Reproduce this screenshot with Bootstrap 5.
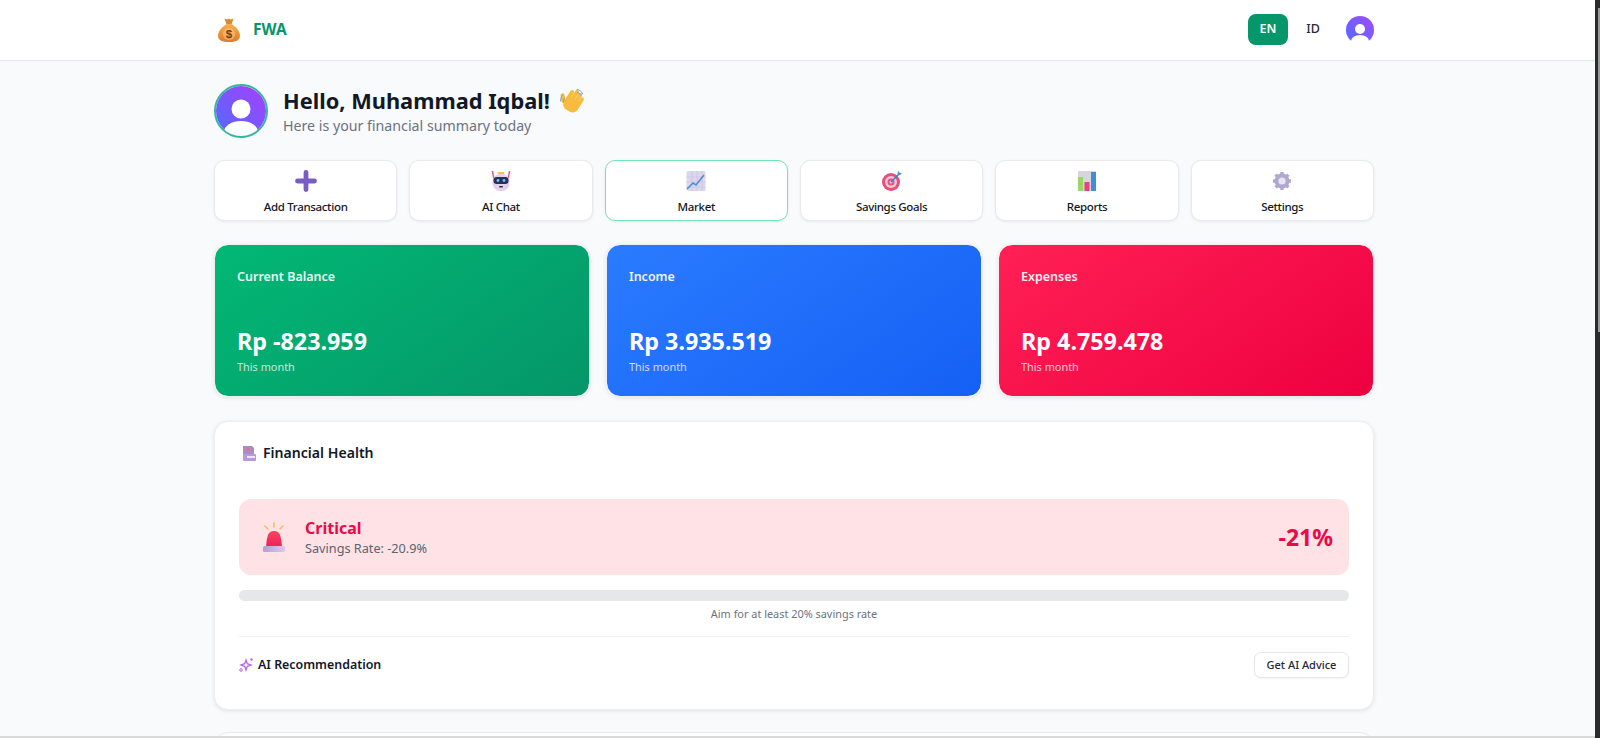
<!DOCTYPE html>
<html lang="en">
<head>
    <meta charset="UTF-8">
    <meta name="viewport" content="width=device-width, initial-scale=1.0">
    <title>FWA</title>
    <link href="https://cdn.jsdelivr.net/npm/bootstrap@5.3.0/dist/css/bootstrap.min.css" rel="stylesheet">
    <style>
        html, body { height: 738px; overflow: hidden; }
        body { background: #f9fafb; font-family: "Noto Sans", "Open Sans", sans-serif; color: #111827; }
        .page-wrap { width: 1160px; margin-left: 214px; }
        .top-bar { height: 61px; background: #fff; border-bottom: 1px solid #e5e7eb; }
        .brand-name { color: #059669; font-weight: 700; font-size: 15.5px; margin-left: 12px; }
        .lang-on { background: #059669; color: #fff; font-size: 12.5px; font-weight: 600; width: 40px; height: 31px; border-radius: 8px; border: 0; padding: 0; margin-bottom: 1px; }
        .lang-off { background: transparent; color: #1f2937; font-size: 12.5px; font-weight: 500; width: 40px; height: 31px; border: 0; padding: 0; margin: 0 13px 1px 5px; }
        .hello-row { padding-top: 23px; margin-bottom: 22px; }
        .hello-avatar { width: 54px; height: 54px; border-radius: 50%; border: 2px solid #34b89a; overflow: hidden; margin-right: 15px; flex: none; }
        .hello-title { font-size: 21.8px; font-weight: 700; line-height: 30px; margin: 0; color: #111827; }
        .hello-sub { font-size: 14.2px; line-height: 20px; color: #6b7280; margin: 0; }
        .act-grid { display: grid; grid-template-columns: repeat(6, 1fr); gap: 12px; margin-bottom: 23px; }
        .act-btn { height: 61px; background: #fff; border: 1px solid #e8eaee; border-radius: 10px; box-shadow: 0 1px 3px rgba(0,0,0,.07); display: flex; flex-direction: column; align-items: center; padding-top: 9px; font-size: 11.5px; letter-spacing: -.33px; font-weight: 500; color: #111827; }
        .act-btn span { line-height: 16px; margin-top: 7px; }
        .act-btn.act-on { border-color: #6ee7b7; }
        .act-btn svg { width: 22px; height: 22px; flex: none; }
        .stat-grid { display: grid; grid-template-columns: repeat(3, 1fr); gap: 16px; margin-bottom: 24px; }
        .stat-box { height: 153px; border: 1px solid #eef0f3; background-clip: padding-box; border-radius: 14px; color: #fff; padding: 23px 22px; box-shadow: 0 1px 4px rgba(0,0,0,.1); }
        .stat-label { font-size: 12.5px; font-weight: 600; line-height: 18px; opacity: .92; margin-bottom: 40px; }
        .stat-value { font-size: 23.3px; font-weight: 700; line-height: 30px; }
        .stat-note { font-size: 10.9px; line-height: 16px; opacity: .75; margin-top: 3px; }
        .bg-green { background-image: linear-gradient(145deg, #02b875, #059669); }
        .bg-blue { background-image: linear-gradient(145deg, #2b7bff, #1560f5); }
        .bg-red { background-image: linear-gradient(145deg, #ff2055, #ee0040); }
        .health-box { height: 289px; background: #fff; border-radius: 14px; border: 1px solid #eceef1; box-shadow: 0 1px 4px rgba(0,0,0,.1); padding: 19px 24px 0; margin-bottom: 22px; }
        .health-title { font-size: 14.1px; font-weight: 600; line-height: 24px; margin-bottom: 34px; color: #111827; }
        .health-title svg { width: 13px; height: 15px; margin: 0 7px 0 4px; }
        .alert-row { height: 76px; background: #fee2e5; border-radius: 12px; padding: 0 16px 0 24px; }
        .alert-name { color: #e90b45; font-size: 16px; font-weight: 700; line-height: 22px; }
        .alert-rate { color: #5b6470; font-size: 12.7px; line-height: 18px; }
        .alert-pct { color: #e90b45; font-size: 23px; font-weight: 700; }
        .bar-track { height: 11px; background: #e5e7eb; border-radius: 6px; margin-top: 15px; }
        .bar-hint { font-size: 10.9px; line-height: 16px; color: #6b7280; text-align: center; margin-top: 5px; }
        .rule-line { height: 1px; background: #f0f1f3; margin: 14px 0 15px; }
        .rec-title { font-size: 12.4px; font-weight: 600; color: #111827; }
        .rec-title svg { width: 15px; height: 15px; margin-right: 4px; }
        .advice-btn { width: 95px; height: 26px; background: #fff; border: 1px solid #e5e7eb; border-radius: 7px; box-shadow: 0 1px 2px rgba(0,0,0,.05); font-size: 11px; font-weight: 500; color: #1f2937; padding: 0; }
        .next-clip { height: 6px; overflow: hidden; }
        .next-box { height: 60px; background: #fff; border: 1px solid #e5e7eb; border-radius: 14px; }
        .shot-bar { position: fixed; top: 0; right: 0; width: 5px; height: 738px; background: #2b2b2b; }
        .shot-thumb { position: fixed; top: 8px; right: 0; width: 2px; height: 324px; background: #9a9a9a; }
        .shot-line { position: fixed; left: 0; bottom: 0; width: 1595px; height: 2px; background: #d9d9d9; }
    </style>
</head>
<body>
    <nav class="top-bar">
        <div class="page-wrap d-flex align-items-center justify-content-between h-100">
            <div class="d-flex align-items-center">
                <svg width="24" height="26" viewBox="0 0 24 26" style="margin-left:3px">
                    <defs><linearGradient id="bagGrad" x1="0" y1="0" x2="0" y2="1"><stop offset="0" stop-color="#f9b04e"/><stop offset="1" stop-color="#e0792a"/></linearGradient></defs>
                    <path d="M7.500 1.500l3 1 1.500-1 1.500 1 3-1-2 6h-5z" fill="#d98a35"/>
                    <path d="M9.500 7h5c4 2.500 8.500 7 8.500 11.500 0 5-4.500 6.500-11 6.500S1 23.500 1 18.500C1 14 5.500 9.500 9.500 7z" fill="url(#bagGrad)"/>
                    <circle cx="12" cy="17" r="6" fill="#fbd08a" opacity=".55"/>
                    <text x="12" y="21" font-size="11.500" font-weight="700" text-anchor="middle" fill="#6b3f16" font-family="Liberation Sans">$</text>
                </svg>
                <span class="brand-name">FWA</span>
            </div>
            <div class="d-flex align-items-center">
                <button class="lang-on">EN</button>
                <button class="lang-off">ID</button>
                <svg width="28" height="28" viewBox="0 0 28 28">
                    <defs><linearGradient id="navGrad" x1="0" y1="1" x2="1" y2="0"><stop offset="0" stop-color="#4f6cff"/><stop offset="1" stop-color="#a24bff"/></linearGradient></defs>
                    <circle cx="14" cy="14" r="14" fill="url(#navGrad)"/>
                    <circle cx="14" cy="13" r="5" fill="#fff"/>
                    <ellipse cx="14" cy="25" rx="9" ry="6" fill="#fff"/>
                </svg>
            </div>
        </div>
    </nav>

    <main class="page-wrap">
        <div class="d-flex align-items-center hello-row">
            <div class="hello-avatar">
                <svg width="50" height="50" viewBox="0 0 50 50" class="d-block">
                    <defs><linearGradient id="bigGrad" x1="0" y1="1" x2="1" y2="0"><stop offset="0" stop-color="#4f6cff"/><stop offset="1" stop-color="#a83fff"/></linearGradient></defs>
                    <rect width="50" height="50" fill="url(#bigGrad)"/>
                    <circle cx="25" cy="23" r="9.500" fill="#fff"/>
                    <ellipse cx="25" cy="46" rx="17" ry="11" fill="#fff"/>
                </svg>
            </div>
            <div>
                <h1 class="hello-title d-flex align-items-center">Hello, Muhammad Iqbal!
                    <svg width="26" height="26" viewBox="0 0 26 26" style="margin-left:9px">
                        <g fill="#f7bb3e" transform="rotate(32 14 14)">
                            <rect x="6" y="4" width="4" height="13" rx="2"/>
                            <rect x="10.200" y="1.500" width="4" height="14" rx="2"/>
                            <rect x="14.400" y="2" width="4" height="14" rx="2"/>
                            <rect x="18.500" y="5" width="3.600" height="12" rx="1.800"/>
                            <rect x="6" y="10" width="16" height="14" rx="6"/>
                            <rect x="1.500" y="11" width="4" height="10" rx="2" transform="rotate(-40 3.500 16)"/>
                        </g>
                        <path d="M1.500 13c0-2.500.700-4.500 2-6M4.500 14c0-1.600.400-3 1.300-4M18 1.500c2.400.300 4.500 1.700 5.500 4M18.500 4.500c1.400.200 2.500 1 3 2.200" stroke="#6ba4dc" stroke-width="1" fill="none" stroke-linecap="round"/>
                    </svg>
                </h1>
                <p class="hello-sub">Here is your financial summary today</p>
            </div>
        </div>

        <div class="act-grid">
            <div class="act-btn">
                <svg viewBox="0 0 22 22"><path d="M11 2.500v17M2.500 11h17" stroke="#7a5cc2" stroke-width="4.800" stroke-linecap="round"/></svg>
                <span>Add Transaction</span>
            </div>
            <div class="act-btn">
                <svg viewBox="0 0 22 22">
                    <path d="M2.500 1l1.500 9M19.500 1L18 10" stroke="#e4577c" stroke-width="1.500"/>
                    <path d="M7.500 2h7l-1 3h-5z" fill="#f4c34a"/>
                    <rect x="2.500" y="4" width="17" height="17" rx="7.500" fill="#e6d0e8"/>
                    <rect x="3.500" y="7" width="15" height="7" rx="3.200" fill="#26305c"/>
                    <circle cx="8" cy="10.500" r="1.400" fill="#6fc7f5"/><circle cx="14" cy="10.500" r="1.400" fill="#6fc7f5"/>
                    <rect x="9" y="16" width="4" height="1.600" rx=".8" fill="#26305c"/>
                </svg>
                <span>AI Chat</span>
            </div>
            <div class="act-btn act-on">
                <svg viewBox="0 0 22 22">
                    <rect x="1.500" y="1" width="19" height="20" rx="1.500" fill="#dcd8ec"/>
                    <path d="M1.500 7h19M1.500 12h19M1.500 17h19M7 1v20M12 1v20M17 1v20" stroke="#c6c0dd" stroke-width=".6"/>
                    <path d="M2 19l6-6 3 2 8-10" stroke="#4f8fd0" stroke-width="1.600" fill="none"/>
                </svg>
                <span>Market</span>
            </div>
            <div class="act-btn">
                <svg viewBox="0 0 22 22">
                    <circle cx="10" cy="12" r="9" fill="#e4517f"/><circle cx="10" cy="12" r="6" fill="#f3c6d6"/><circle cx="10" cy="12" r="3.500" fill="#e4517f"/><circle cx="10" cy="12" r="1.500" fill="#f3c6d6"/>
                    <path d="M10 12L19 3" stroke="#3f80c9" stroke-width="1.600"/>
                    <path d="M16 2l1 1 .500-2.500 1 2.500 2.500.500-2 1.500-2-.500z" fill="#3f92dd"/>
                </svg>
                <span>Savings Goals</span>
            </div>
            <div class="act-btn">
                <svg viewBox="0 0 22 22">
                    <rect x="2" y="1" width="18" height="20" rx="1" fill="#d8d5dc"/>
                    <rect x="2" y="7" width="5" height="14" fill="#9ed36a"/>
                    <rect x="8.500" y="12" width="5" height="9" fill="#e8417b"/>
                    <rect x="15" y="2" width="5" height="19" fill="#3f8edb"/>
                </svg>
                <span>Reports</span>
            </div>
            <div class="act-btn">
                <svg viewBox="0 0 22 22">
                    <path d="M11 11m-7.500 0a7.500 7.500 0 1 0 15 0a7.500 7.500 0 1 0-15 0" fill="#b2a8cf"/>
                    <path d="M11 2v18M2 11h18M4.600 4.600l12.800 12.800M17.400 4.600L4.600 17.400" stroke="#b2a8cf" stroke-width="3.400"/>
                    <circle cx="11" cy="11" r="3.600" fill="#e8e5f2"/>
                </svg>
                <span>Settings</span>
            </div>
        </div>

        <div class="stat-grid">
            <div class="stat-box bg-green">
                <div class="stat-label">Current Balance</div>
                <div class="stat-value">Rp -823.959</div>
                <div class="stat-note">This month</div>
            </div>
            <div class="stat-box bg-blue">
                <div class="stat-label">Income</div>
                <div class="stat-value">Rp 3.935.519</div>
                <div class="stat-note">This month</div>
            </div>
            <div class="stat-box bg-red">
                <div class="stat-label">Expenses</div>
                <div class="stat-value">Rp 4.759.478</div>
                <div class="stat-note">This month</div>
            </div>
        </div>

        <section class="health-box">
            <div class="health-title d-flex align-items-center">
                <svg viewBox="0 0 13 15">
                    <path d="M0 0h9l2 2v9H0z" fill="#a78fc4"/><rect x="0" y="8" width="13" height="7" rx="1" fill="#b79ad6"/>
                    <circle cx="5" cy="3.500" r="1.700" fill="#e66aa0"/><rect x="4" y="10" width="8" height="2" fill="#efe6f7"/>
                </svg>
                Financial Health
            </div>
            <div class="alert-row d-flex align-items-center justify-content-between">
                <div class="d-flex align-items-center">
                    <svg width="22" height="30" viewBox="0 0 22 30" style="margin-right:20px">
                        <defs><linearGradient id="domeGrad" x1="0" y1="0" x2="0" y2="1"><stop offset="0" stop-color="#f8455f"/><stop offset="1" stop-color="#ee1f5a"/></linearGradient>
                        <linearGradient id="baseGrad" x1="0" y1="0" x2="1" y2="0"><stop offset="0" stop-color="#b79ad6"/><stop offset="1" stop-color="#dcc8ee"/></linearGradient></defs>
                        <path d="M11 1v4M2 4l3 3M20 4l-3 3" stroke="#f3c04e" stroke-width="1.500" stroke-linecap="round"/>
                        <path d="M3 25c.500-4 .500-8 2-12 1-2.500 3-4 6-4s5 1.500 6 4c1.500 4 1.500 8 2 12z" fill="url(#domeGrad)"/>
                        <rect x="0" y="24" width="22" height="6" rx="1.500" fill="url(#baseGrad)"/>
                    </svg>
                    <div>
                        <div class="alert-name">Critical</div>
                        <div class="alert-rate">Savings Rate: -20.9%</div>
                    </div>
                </div>
                <div class="alert-pct">-21%</div>
            </div>
            <div class="bar-track"></div>
            <div class="bar-hint">Aim for at least 20% savings rate</div>
            <div class="rule-line"></div>
            <div class="d-flex align-items-center justify-content-between">
                <div class="rec-title d-flex align-items-center">
                    <svg viewBox="0 0 15 15">
                        <path d="M7 3l1.300 3.700L12 8l-3.700 1.300L7 13l-1.300-3.700L2 8l3.700-1.300z" fill="none" stroke="#b565e6" stroke-width="1.300"/>
                        <circle cx="12.500" cy="2.500" r="1.200" fill="#b565e6"/><circle cx="2" cy="13" r="1.300" fill="none" stroke="#b565e6"/>
                    </svg>
                    AI Recommendation
                </div>
                <button class="advice-btn">Get AI Advice</button>
            </div>
        </section>
        <div class="next-clip"><div class="next-box"></div></div>
    </main>

    <div class="shot-line"></div>
    <div class="shot-bar"></div>
    <div class="shot-thumb"></div>
</body>
</html>
